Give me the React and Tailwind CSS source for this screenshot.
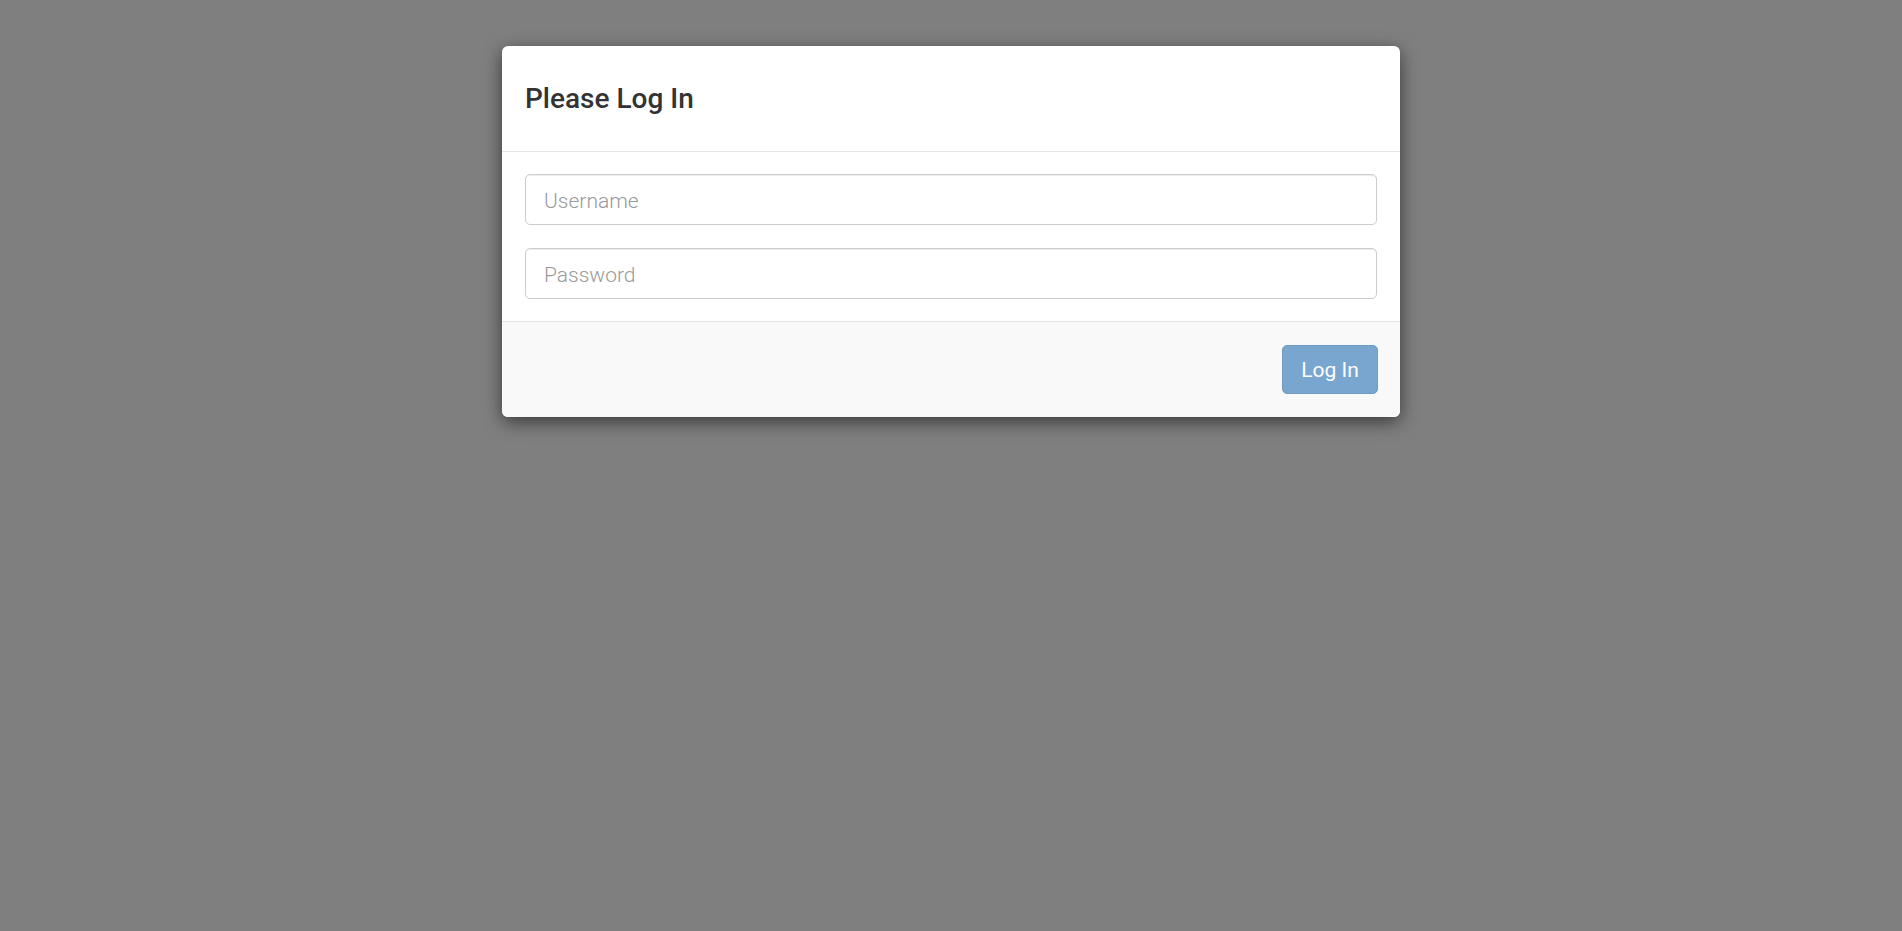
import React, { useState } from 'react';

const App = () => {
  const [username, setUsername] = useState('');
  const [password, setPassword] = useState('');

  return (
    <div className="min-h-screen w-full bg-[#7f7f7f] pt-[46px] font-['Roboto',sans-serif]">
      <div className="mx-auto w-[898px] bg-white rounded-[6px] shadow-[0_5px_18px_rgba(0,0,0,0.55)] overflow-hidden">
        <div className="h-[106px] px-[23px] flex items-center border-b border-[#e5e5e5]">
          <h4 className="text-[28px] font-medium text-[#333] leading-none">Please Log In</h4>
        </div>

        <div className="px-[23px] pt-[22px] pb-[22px] flex flex-col gap-[23px]">
          <input
            type="text"
            value={username}
            onChange={(e) => setUsername(e.target.value)}
            placeholder="Username"
            className="w-full h-[51px] px-[18px] pt-[2px] text-[21px] font-light text-[#555] border border-[#ccc] rounded-[5px] shadow-[inset_0_1px_1px_rgba(0,0,0,0.075)] outline-none placeholder:text-[#999]"
          />
          <input
            type="password"
            value={password}
            onChange={(e) => setPassword(e.target.value)}
            placeholder="Password"
            className="w-full h-[51px] px-[18px] pt-[2px] text-[21px] font-light text-[#555] border border-[#ccc] rounded-[5px] shadow-[inset_0_1px_1px_rgba(0,0,0,0.075)] outline-none placeholder:text-[#999]"
          />
        </div>

        <div className="bg-[#f9f9f9] border-t border-[#e5e5e5] px-[22px] pt-[23px] pb-[23px] flex justify-end">
          <button
            disabled={!username || !password}
            className="h-[49px] w-[96px] pt-[2px] bg-[#78a6ce] border border-[#6f9bc2] rounded-[5px] text-white text-[21px] cursor-not-allowed"
          >
            Log In
          </button>
        </div>
      </div>
    </div>
  );
};

export default App;
